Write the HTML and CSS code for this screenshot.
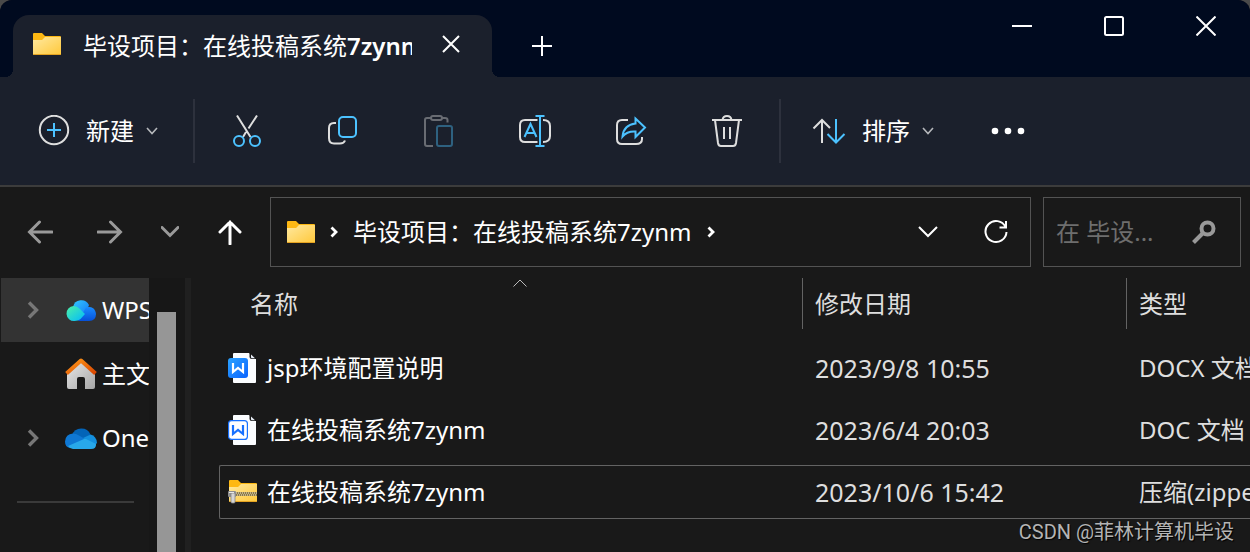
FILE: index.html
```html
<!DOCTYPE html>
<html lang="zh-CN">
<head>
    <meta charset="UTF-8">
    <meta name="viewport" content="width=device-width, initial-scale=1.0">
    <title>毕设项目：在线投稿系统7zynm</title>
    <link rel="stylesheet" href="styles.css">
</head>
<body>
    <!-- shared icons -->
    <svg class="defs" width="0" height="0" aria-hidden="true">
        <defs>
            <linearGradient id="folderFill" x1="0" y1="0" x2="1" y2="1">
                <stop offset="0" stop-color="#ffe9a0"/>
                <stop offset="1" stop-color="#ffc83a"/>
            </linearGradient>
            <linearGradient id="docFill" x1="0" y1="0" x2="1" y2="1">
                <stop offset="0" stop-color="#2ba3ff"/>
                <stop offset="1" stop-color="#0a63ff"/>
            </linearGradient>
            <linearGradient id="wpsLeft" x1="0" y1="0" x2="1" y2="1">
                <stop offset="0" stop-color="#4df2a6"/>
                <stop offset="1" stop-color="#00b8ff"/>
            </linearGradient>
            <linearGradient id="wpsTop" x1="0" y1="0" x2="1" y2="1">
                <stop offset="0" stop-color="#33c8ff"/>
                <stop offset="1" stop-color="#1478f5"/>
            </linearGradient>
            <linearGradient id="wpsRight" x1="0" y1="0" x2="0" y2="1">
                <stop offset="0" stop-color="#1a8cff"/>
                <stop offset="1" stop-color="#0650d8"/>
            </linearGradient>
            <linearGradient id="roofFill" x1="0" y1="0" x2="1" y2="1">
                <stop offset="0" stop-color="#ff9a1a"/>
                <stop offset="1" stop-color="#d94400"/>
            </linearGradient>
            <linearGradient id="wallFill" x1="0" y1="0" x2="1" y2="1">
                <stop offset="0" stop-color="#e8e8e8"/>
                <stop offset="1" stop-color="#a6a6a6"/>
            </linearGradient>
        </defs>
        <symbol id="folder" viewBox="0 0 28 22">
            <path d="M0 1Q0 0 1 0H9L12 3H27Q28 3 28 4V20H0Z" fill="#fdb813"/>
            <path d="M0 7H9L12 4H28V21Q28 22 27 22H1Q0 22 0 21Z" fill="url(#folderFill)"/>
            <path d="M0 21H28Q28 22 27 22H1Q0 22 0 21Z" fill="#e5a321"/>
        </symbol>
        <symbol id="chevron-down" viewBox="0 0 12 8">
            <path d="M1 1L6 6.500L11 1" fill="none" stroke="currentColor" stroke-width="1.600"/>
        </symbol>
        <symbol id="chevron-right" viewBox="0 0 12 18">
            <path d="M2 1.500L9.500 9L2 16.500" fill="none" stroke="currentColor" stroke-width="3.400"/>
        </symbol>
        <symbol id="crumb" viewBox="0 0 8 12">
            <path d="M1.500 1.500L6 6L1.500 10.500" fill="none" stroke="currentColor" stroke-width="2.800"/>
        </symbol>
    </svg>

    <div class="window">
        <header class="titlebar">
            <div class="tab">
                <svg class="folder-icon" width="28" height="22"><use href="#folder"/></svg>
                <span class="tab-title">毕设项目：在线投稿系统<span class="tab-latin">7zynm</span></span>
                <button class="tab-close" aria-label="关闭标签页">
                    <svg width="18" height="18" viewBox="0 0 18 18"><path d="M1 1L17 17M17 1L1 17" class="line-white"/></svg>
                </button>
            </div>
            <button class="tab-add" aria-label="新建标签页">
                <svg width="20" height="20" viewBox="0 0 20 20"><path d="M10 0V20M0 10H20" class="line-white"/></svg>
            </button>
            <div class="window-controls">
                <button aria-label="最小化">
                    <svg width="20" height="20" viewBox="0 0 20 20"><path d="M0 10H20" class="line-white"/></svg>
                </button>
                <button aria-label="最大化">
                    <svg width="20" height="20" viewBox="0 0 20 20"><rect x="1" y="1" width="18" height="18" rx="1.500" class="line-white"/></svg>
                </button>
                <button aria-label="关闭">
                    <svg width="20" height="20" viewBox="0 0 20 20"><path d="M.5 .5L19.500 19.500M19.500 .5L.5 19.500" class="line-white"/></svg>
                </button>
            </div>
        </header>

        <div class="toolbar">
            <button class="tool-text tool-new">
                <svg width="32" height="32" viewBox="0 0 32 32">
                    <circle cx="16" cy="15" r="14.200" class="line"/>
                    <path d="M16 8V22M9 15H23" class="line-blue"/>
                </svg>
                <span>新建</span>
                <svg class="small-chevron" width="12" height="8"><use href="#chevron-down"/></svg>
            </button>
            <div class="divider"></div>
            <button class="tool" aria-label="剪切">
                <svg width="32" height="34" viewBox="0 0 32 34">
                    <path d="M6 1.500L19.500 23M26 1.500L17.500 14.500M15 18L12 23" class="line"/>
                    <circle cx="8" cy="27" r="5" class="line-blue"/>
                    <circle cx="24" cy="27" r="5" class="line-blue"/>
                </svg>
            </button>
            <button class="tool" aria-label="复制">
                <svg width="32" height="32" viewBox="0 0 32 32">
                    <rect x="12" y="2" width="17" height="20" rx="4" class="line-blue"/>
                    <path d="M9 8H7Q2 8 2 13V23Q2 28.500 7 28.500H13Q17 28.500 18 25.500" class="line"/>
                </svg>
            </button>
            <button class="tool tool-disabled" aria-label="粘贴" disabled>
                <svg width="32" height="34" viewBox="0 0 32 34">
                    <path d="M8 4H4Q2 4 2 6V30Q2 32 4 32H10M19 4H22Q24.500 4 24.500 6V8.500" class="line"/>
                    <rect x="8" y="2" width="11" height="4" rx="2" class="line"/>
                    <rect x="14" y="12" width="15" height="20" rx="2" class="line-blue"/>
                </svg>
            </button>
            <button class="tool" aria-label="重命名">
                <svg width="34" height="34" viewBox="0 0 34 34">
                    <path d="M19.500 6H7Q2 6 2 11V23Q2 28 7 28H19.500M25 6Q32 6 32 12V22Q32 28 25 28" class="line"/>
                    <path d="M6.500 23L12.500 10L18.500 23M8.500 19H16.500M22 2V32M17.500 2H26.500M17.500 32H26.500" class="line-blue"/>
                </svg>
            </button>
            <button class="tool" aria-label="共享">
                <svg width="32" height="32" viewBox="0 0 32 32">
                    <path d="M13 5H7Q2 5 2 10V24Q2 29 7 29H21Q27 29 27 24V22" class="line"/>
                    <path d="M20.500 3.500L30 12.500L20.500 22V16.500Q12 16 7.500 21.500Q8.500 10 20.500 8.500Z" class="line-blue"/>
                </svg>
            </button>
            <button class="tool" aria-label="删除">
                <svg width="32" height="34" viewBox="0 0 32 34">
                    <path d="M1 6H31M11.500 6Q12 2 16 2Q20 2 20.500 6M4 6L7 29Q7.500 32 10 32H22Q24.500 32 25 29L28 6M13 13V25M19 13V25" class="line"/>
                </svg>
            </button>
            <div class="divider"></div>
            <button class="tool-text tool-sort">
                <svg width="34" height="32" viewBox="0 0 34 32">
                    <path d="M10 28V5M1.500 13.500L10 5L18 13" class="line"/>
                    <path d="M24 4V27.500M15.500 19L24 27.500L32.500 19" class="line-blue"/>
                </svg>
                <span>排序</span>
                <svg class="small-chevron" width="12" height="8"><use href="#chevron-down"/></svg>
            </button>
            <button class="tool-more" aria-label="查看更多">
                <svg width="34" height="8" viewBox="0 0 34 8" fill="#fff"><circle cx="4" cy="4" r="3.300"/><circle cx="17" cy="4" r="3.300"/><circle cx="30" cy="4" r="3.300"/></svg>
            </button>
        </div>

        <div class="navbar">
            <button class="nav-button nav-back" aria-label="后退">
                <svg width="26" height="24" viewBox="0 0 26 24"><path d="M25 12H3M12.500 2L2.500 12L12.500 22"/></svg>
            </button>
            <button class="nav-button" aria-label="前进">
                <svg width="26" height="24" viewBox="0 0 26 24"><path d="M1 12H23M13.500 2L23.500 12L13.500 22"/></svg>
            </button>
            <button class="nav-button" aria-label="最近浏览的位置">
                <svg width="18" height="12" viewBox="0 0 18 12"><path d="M1 1.500L9 9.500L17 1.500"/></svg>
            </button>
            <button class="nav-button nav-up" aria-label="上移">
                <svg width="24" height="26" viewBox="0 0 24 26"><path d="M12 25V3M2 13L12 3L22 13"/></svg>
            </button>
            <nav class="address" aria-label="地址栏">
                <svg class="folder-icon" width="28" height="22"><use href="#folder"/></svg>
                <svg width="8" height="12"><use href="#crumb"/></svg>
                <a href="#">毕设项目：在线投稿系统7zynm</a>
                <svg width="8" height="12"><use href="#crumb"/></svg>
                <div class="address-actions">
                    <button aria-label="以前的位置">
                        <svg width="20" height="12" viewBox="0 0 20 12"><path d="M1 1L10 10L19 1" class="line-white"/></svg>
                    </button>
                    <button aria-label="刷新">
                        <svg width="24" height="26" viewBox="0 0 24 26">
                            <path d="M21.500 8A10.500 10.500 0 1 0 22.500 13M22 2V8.500H15.500" class="line-white"/>
                        </svg>
                    </button>
                </div>
            </nav>
            <label class="search">
                <input type="text" placeholder="在 毕设..." aria-label="搜索">
                <svg width="24" height="24" viewBox="0 0 24 24">
                    <circle cx="15.500" cy="8.500" r="6" fill="none" stroke="#999" stroke-width="4"/>
                    <path d="M11 13L1.500 22.500" stroke="#999" stroke-width="4"/>
                </svg>
            </label>
        </div>

        <div class="content">
            <aside class="sidebar">
                <a href="#" class="side-item active">
                    <svg width="12" height="18"><use href="#chevron-right"/></svg>
                    <svg width="32" height="32" viewBox="0 0 32 32">
                        <path d="M8 13A8.500 8.500 0 0 1 24 11L20 22H10Z" fill="url(#wpsTop)"/>
                        <path d="M13 27L21 13.500A7.200 7.200 0 0 1 31 20Q31 27 24 27Z" fill="url(#wpsRight)"/>
                        <path d="M8.500 12Q12 12 15 15L20 20L15.500 25Q13.500 27 9.500 27A7.500 7.500 0 0 1 8.500 12Z" fill="url(#wpsLeft)"/>
                    </svg>
                    <span>WPS云盘</span>
                </a>
                <a href="#" class="side-item">
                    <svg width="12" height="18"></svg>
                    <svg width="32" height="32" viewBox="0 0 32 32">
                        <path d="M2 15L16 3L30 15V29Q30 31 28 31H20V21Q20 19 18 19H14Q12 19 12 21V31H4Q2 31 2 29Z" fill="url(#wallFill)"/>
                        <path d="M1.500 15.500L16 2.500L30.500 15.500" fill="none" stroke="url(#roofFill)" stroke-width="4" stroke-linejoin="round"/>
                    </svg>
                    <span>主文件夹</span>
                </a>
                <a href="#" class="side-item">
                    <svg width="12" height="18"><use href="#chevron-right"/></svg>
                    <svg width="32" height="32" viewBox="0 0 32 32">
                        <path d="M7 13A10 10 0 0 1 25.500 12.500L18 19Z" fill="#0364b8"/>
                        <path d="M8 11.500Q11 11.500 14 13.500L22 18L5 26Q0 25 0 19.500Q.5 12 8 11.500Z" fill="#0f78d4"/>
                        <path d="M18 16L25.500 12.500Q31.500 14 32 21L29 24Z" fill="#1490df"/>
                        <path d="M3 24L19 17Q20 16.800 21 17L31 22Q31.500 27 26 27H8Q5 27 3 24Z" fill="#28a8ea"/>
                    </svg>
                    <span>OneDrive</span>
                </a>
                <hr>
            </aside>
            <div class="scrollbar"><div class="scroll-thumb"></div></div>
            <main class="files">
                <table>
                    <thead>
                        <tr>
                            <th class="sorted">名称
                                <svg class="sort-mark" width="14" height="8" viewBox="0 0 14 8"><path d="M.5 7.500L7 1L13.500 7.500" fill="none" stroke="#bbb"/></svg>
                            </th>
                            <th>修改日期</th>
                            <th>类型</th>
                        </tr>
                    </thead>
                    <tbody>
                        <tr>
                            <td class="name">
                                <svg width="29" height="32" viewBox="0 0 29 32">
                                    <path d="M5 2Q5 1 6 1H21L28 7V30Q28 31 27 31H6Q5 31 5 30Z" fill="#fbfdff"/>
                                    <path d="M21.500 0L29 7H24Q21.500 7 21.500 4.500Z" fill="#191919"/>
                                    <path d="M23 2.500L27 6.300H24Q23 6.300 23 5Z" fill="#e8eef7"/>
                                    <rect x="0" y="6" width="20" height="20" rx="3" fill="url(#docFill)"/>
                                    <path d="M5 11V20L10 16L15 20V11" fill="none" stroke="#fff" stroke-width="2.200"/>
                                </svg>
                                <span>jsp环境配置说明</span>
                            </td>
                            <td class="date">2023/9/8 10:55</td>
                            <td>DOCX 文档</td>
                        </tr>
                        <tr>
                            <td class="name">
                                <svg width="29" height="32" viewBox="0 0 29 32">
                                    <path d="M5 2Q5 1 6 1H21L28 7V30Q28 31 27 31H6Q5 31 5 30Z" fill="#fbfdff"/>
                                    <path d="M21.500 0L29 7H24Q21.500 7 21.500 4.500Z" fill="#191919"/>
                                    <path d="M23 2.500L27 6.300H24Q23 6.300 23 5Z" fill="#e8eef7"/>
                                    <rect x=".6" y="6.600" width="18.800" height="18.800" rx="3" fill="#fff" stroke="#1670ff" stroke-width="1.200"/>
                                    <path d="M5 11V20L10 16L15 20V11" fill="none" stroke="#1670ff" stroke-width="2.200"/>
                                </svg>
                                <span>在线投稿系统7zynm</span>
                            </td>
                            <td class="date">2023/6/4 20:03</td>
                            <td>DOC 文档</td>
                        </tr>
                        <tr class="selected">
                            <td class="name">
                                <svg width="29" height="24" viewBox="0 0 29 24">
                                    <path d="M1 1Q1 0 2 0H10L13 3H28Q29 3 29 4V20H1Z" fill="#fdb813"/>
                                    <path d="M1 7H10L13 4H29V21Q29 22 28 22H2Q1 22 1 21Z" fill="url(#folderFill)"/>
                                    <path d="M1 21H29Q29 22 28 22H2Q1 22 1 21Z" fill="#e5a321"/>
                                    <rect x="7" y="12" width="22" height="4" fill="#8c7a45"/>
                                    <path d="M8 13H29M9 15H29" stroke="#f0ead8" stroke-width="1" stroke-dasharray="1 1"/>
                                    <rect x="0" y="11" width="8" height="6" rx="1" fill="#8f8f8f"/>
                                    <rect x="3" y="13" width="4" height="10" rx="1" fill="#d5d5d5" stroke="#858585" stroke-width=".8"/>
                                    <path d="M1 12.500H6" stroke="#e8e8e8"/>
                                </svg>
                                <span>在线投稿系统7zynm</span>
                            </td>
                            <td class="date">2023/10/6 15:42</td>
                            <td>压缩(zipped)文件夹</td>
                        </tr>
                    </tbody>
                </table>
            </main>
        </div>
        <div class="watermark">CSDN @菲林计算机毕设</div>
    </div>
</body>
</html>
```
FILE: styles.css
```css
* {
    box-sizing: border-box;
}
body {
    margin: 0;
    background: #4a4a4a;
    color: #fff;
    font-family: "Noto Sans", "Noto Sans CJK SC", sans-serif;
    font-size: 24px;
    line-height: 32px;
}
button {
    display: flex;
    align-items: center;
    justify-content: center;
    padding: 0;
    border: none;
    background: none;
    color: inherit;
    font: inherit;
    cursor: pointer;
}
a {
    color: inherit;
    text-decoration: none;
}
svg {
    flex: none;
}
.defs {
    position: absolute;
}
.window {
    position: relative;
    display: flex;
    flex-direction: column;
    height: 100vh;
    overflow: hidden;
    border-radius: 12px 12px 0 0;
    background: #191919;
}

/* icon strokes */
.line, .line-blue, .line-white {
    fill: none;
    stroke: #dedede;
    stroke-width: 2;
}
.line-blue {
    stroke: #4cc2ff;
}
.line-white {
    stroke: #fff;
}

/* title bar */
.titlebar {
    display: flex;
    align-items: flex-end;
    height: 77px;
    flex: none;
    padding-left: 13px;
    background: #000a1f;
}
.tab {
    position: relative;
    display: flex;
    align-items: center;
    width: 479px;
    height: 62px;
    padding: 0 32px 4px 20px;
    border-radius: 16px 16px 0 0;
    background: #1b202c;
}
.tab::before, .tab::after {
    content: "";
    position: absolute;
    bottom: 0;
    width: 8px;
    height: 8px;
}
.tab::before {
    left: -8px;
    background: radial-gradient(circle at 0 0, #000a1f 8px, #1b202c 8px);
}
.tab::after {
    right: -8px;
    background: radial-gradient(circle at 100% 0, #000a1f 8px, #1b202c 8px);
}
.tab-title {
    flex: 1;
    min-width: 0;
    margin: 4px 30px 0 22px;
    overflow: hidden;
    white-space: nowrap;
}
.tab-latin {
    font-weight: 600;
}
.tab-add {
    width: 100px;
    height: 62px;
}
.window-controls {
    display: flex;
    align-self: flex-start;
    gap: 4px;
    margin-left: auto;
}
.window-controls button {
    width: 88px;
    height: 52px;
}

/* toolbar */
.toolbar {
    display: flex;
    align-items: center;
    flex: none;
    height: 110px;
    border-bottom: 2px solid #3c3c3c;
    background: #1b202c;
}
.divider {
    width: 2px;
    height: 64px;
    margin-right: 4px;
    background: #2d313d;
}
.tool {
    width: 96px;
    height: 64px;
}
.tool + .divider {
    margin-left: 4px;
}
.tool-disabled {
    opacity: .4;
}
.tool-text {
    height: 64px;
    justify-content: flex-start;
}
.tool-new {
    width: 193px;
    padding-left: 38px;
}
.tool-text span {
    margin: 0 12px 0 16px;
}
.tool-sort {
    padding-left: 27px;
}
.small-chevron {
    color: #b5b7bb;
}
.tool-more {
    width: 148px;
    height: 64px;
}

/* navigation row */
.navbar {
    display: flex;
    flex: none;
    padding: 10px 9px 11px 0;
}
.nav-button {
    width: 60px;
    color: #9a9a9a;
}
.nav-button svg {
    fill: none;
    stroke: currentColor;
    stroke-width: 3;
    stroke-linecap: round;
}
.nav-back {
    width: 80px;
}
.nav-up {
    margin-right: 10px;
    color: #fff;
}
.address {
    display: flex;
    align-items: center;
    flex: 1;
    gap: 15px;
    min-width: 0;
    height: 70px;
    padding: 0 0 0 16px;
    border: 1px solid #535353;
}
.address a {
    white-space: nowrap;
}
.address-actions {
    display: flex;
    height: 100%;
    margin-left: auto;
}
.address-actions button {
    width: 68px;
}
.search {
    display: flex;
    align-items: center;
    width: 198px;
    height: 70px;
    margin-left: 12px;
    padding: 0 24px 0 12px;
    border: 1px solid #535353;
}
.search input {
    flex: 1;
    min-width: 0;
    padding: 0;
    border: none;
    outline: none;
    background: none;
    color: #fff;
    font: inherit;
}
.search input::placeholder {
    color: #6e6e6e;
}

/* sidebar */
.content {
    display: flex;
    flex: 1;
    min-height: 0;
}
.sidebar {
    width: 149px;
    padding-left: 1px;
    overflow: hidden;
}
.side-item {
    display: flex;
    align-items: center;
    height: 64px;
    padding-left: 26px;
    color: #fff;
    white-space: nowrap;
}
.side-item.active {
    background: #333;
}
.side-item svg {
    color: #777;
}
.side-item svg + svg {
    margin: 0 5px 0 26px;
}
.sidebar hr {
    height: 2px;
    margin: 31px 15px 0 16px;
    border: none;
    background: #3a3a3a;
}
.scrollbar {
    width: 42px;
    flex: none;
    padding: 34px 9px 0 8px;
    border-right: 6px solid #202020;
    background: #171717;
}
.scroll-thumb {
    width: 19px;
    height: 100%;
    background: #969696;
}

/* file list */
.files {
    flex: 1;
    min-width: 0;
    padding-left: 28px;
    overflow: hidden;
}
table, thead, tbody {
    display: block;
}
tr {
    display: grid;
    grid-template-columns: minmax(0, 1fr) 324px 124px;
}
th, td {
    padding: 0 0 0 12px;
    overflow: hidden;
    font-weight: normal;
    text-align: left;
    white-space: nowrap;
}
th {
    height: 51px;
    padding-top: 10px;
    border-left: 1px solid #636363;
    color: #dedede;
}
th.sorted {
    position: relative;
    padding-left: 31px;
    border-left: none;
}
.sort-mark {
    position: absolute;
    top: 1px;
    left: 294px;
}
tbody {
    padding-top: 12px;
}
tbody tr {
    height: 54px;
    margin-bottom: 8px;
    border: 1px solid transparent;
    border-right: none;
    border-radius: 2px 0 0 2px;
}
tbody tr.selected {
    border-color: #636363;
}
td {
    padding-left: 13px;
    color: #dedede;
    line-height: 52px;
}
td.name {
    display: flex;
    align-items: center;
    gap: 10px;
    padding-left: 8px;
    color: #fff;
}
td.date {
    font-size: 25px;
}

.watermark {
    position: absolute;
    right: 16px;
    bottom: 4px;
    color: #b4b4b4;
    font-family: Roboto, "Noto Sans CJK SC", sans-serif;
    font-size: 20px;
    text-shadow: 1px 1px 1px #000;
}
```
